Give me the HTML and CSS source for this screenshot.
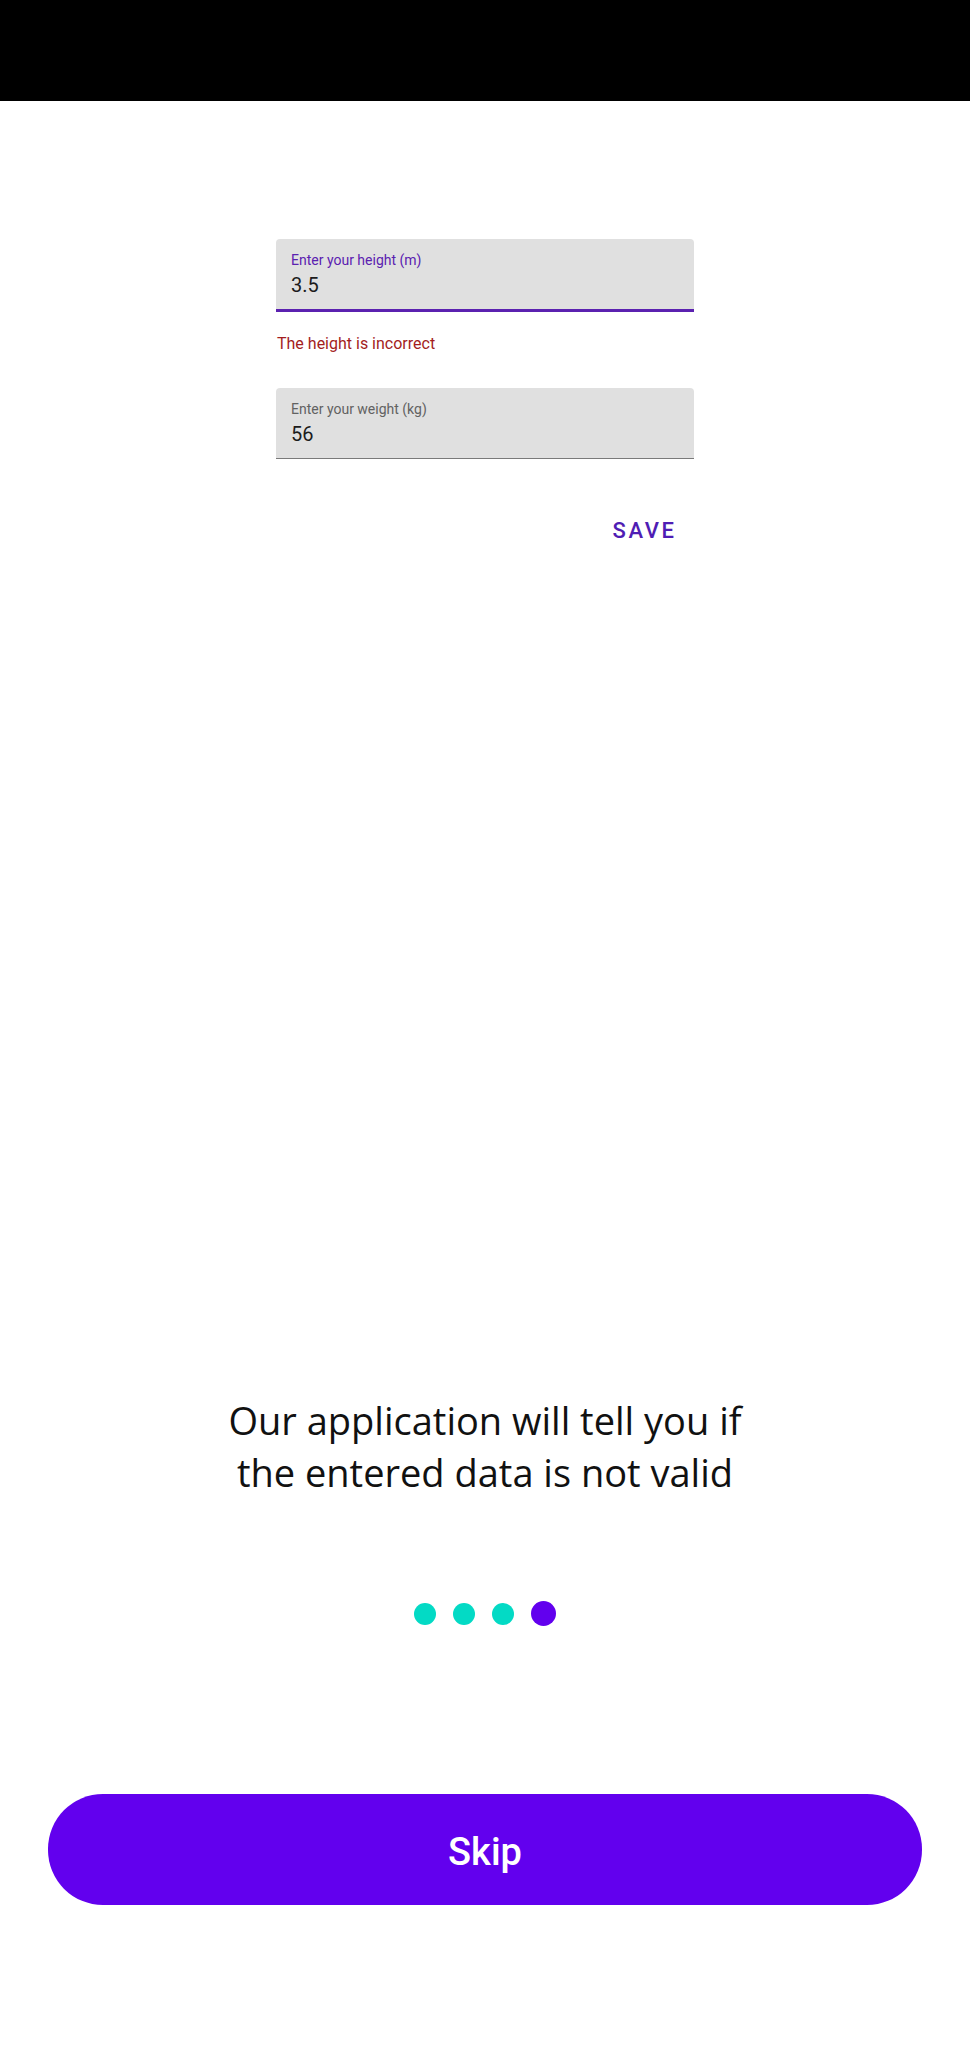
FILE: index.html
```html
<!DOCTYPE html>
<html>
<head>
<meta charset="utf-8">
<link rel="stylesheet" href="styles.css">
</head>
<body>
<div class="statusbar"></div>
<main class="page">
  <section class="form">
    <div class="field field-focused">
      <div class="field-label">Enter your height (m)</div>
      <div class="field-value">3.5</div>
    </div>
    <div class="field-error">The height is incorrect</div>
    <div class="field">
      <div class="field-label">Enter your weight (kg)</div>
      <div class="field-value">56</div>
    </div>
    <div class="actions">
      <span class="save">SAVE</span>
    </div>
  </section>
  <p class="caption">Our application will tell you if<br>the entered data is not valid</p>
  <div class="dots">
    <span class="dot"></span>
    <span class="dot"></span>
    <span class="dot"></span>
    <span class="dot dot-active"></span>
  </div>
  <div class="skip-wrap">
    <button class="skip">Skip</button>
  </div>
</main>
</body>
</html>
```

FILE: styles.css
```css
html, body {
  margin: 0;
  padding: 0;
  background: #ffffff;
}
body {
  font-family: Roboto, "Liberation Sans", sans-serif;
  width: 970px;
}
.statusbar {
  height: 101px;
  background: #000000;
}
.page {
  display: flex;
  flex-direction: column;
  align-items: center;
}
.form {
  width: 418px;
  margin-top: 138px;
  display: flex;
  flex-direction: column;
}
.field {
  box-sizing: border-box;
  height: 71px;
  background: #e0e0e0;
  border-radius: 4px 4px 0 0;
  border-bottom: 1px solid #7a7a7a;
  padding: 12px 15px 0 15px;
}
.field-focused {
  height: 73px;
  border-bottom: 3px solid #5b21b0;
}
.field-label {
  font-size: 14px;
  line-height: 18px;
  color: #626262;
}
.field-focused .field-label {
  color: #5b21b0;
}
.field-value {
  font-size: 20px;
  line-height: 24px;
  color: #1c1c1c;
  margin-top: 4px;
}
.field-error {
  font-size: 16px;
  line-height: 20px;
  color: #a31d1d;
  margin: 22px 0 0 1px;
  height: 54px;
}
.actions {
  display: flex;
  justify-content: flex-end;
  padding-right: 20px;
  margin-top: 60px;
}
.save {
  font-size: 22px;
  line-height: 24px;
  font-weight: 500;
  letter-spacing: 2.6px;
  margin-right: -2.6px;
  color: #4f1db4;
}
.caption {
  font-family: "Open Sans", "Noto Sans", sans-serif;
  font-size: 38px;
  line-height: 52px;
  color: #111111;
  text-align: center;
  margin: 851px 0 0 0;
}
.dots {
  display: flex;
  align-items: center;
  gap: 17px;
  margin-top: 103px;
}
.dot {
  width: 22px;
  height: 22px;
  border-radius: 50%;
  background: #03dac5;
}
.dot-active {
  width: 25px;
  height: 25px;
  background: #6200ee;
}
.skip-wrap {
  width: 874px;
  margin-top: 168px;
}
.skip {
  display: block;
  width: 100%;
  height: 111px;
  border: none;
  border-radius: 55px;
  background: #6200ee;
  color: #ffffff;
  font-family: Roboto, "Liberation Sans", sans-serif;
  font-size: 38px;
  font-weight: 500;
  padding: 4px 0 0 0;
}
```
